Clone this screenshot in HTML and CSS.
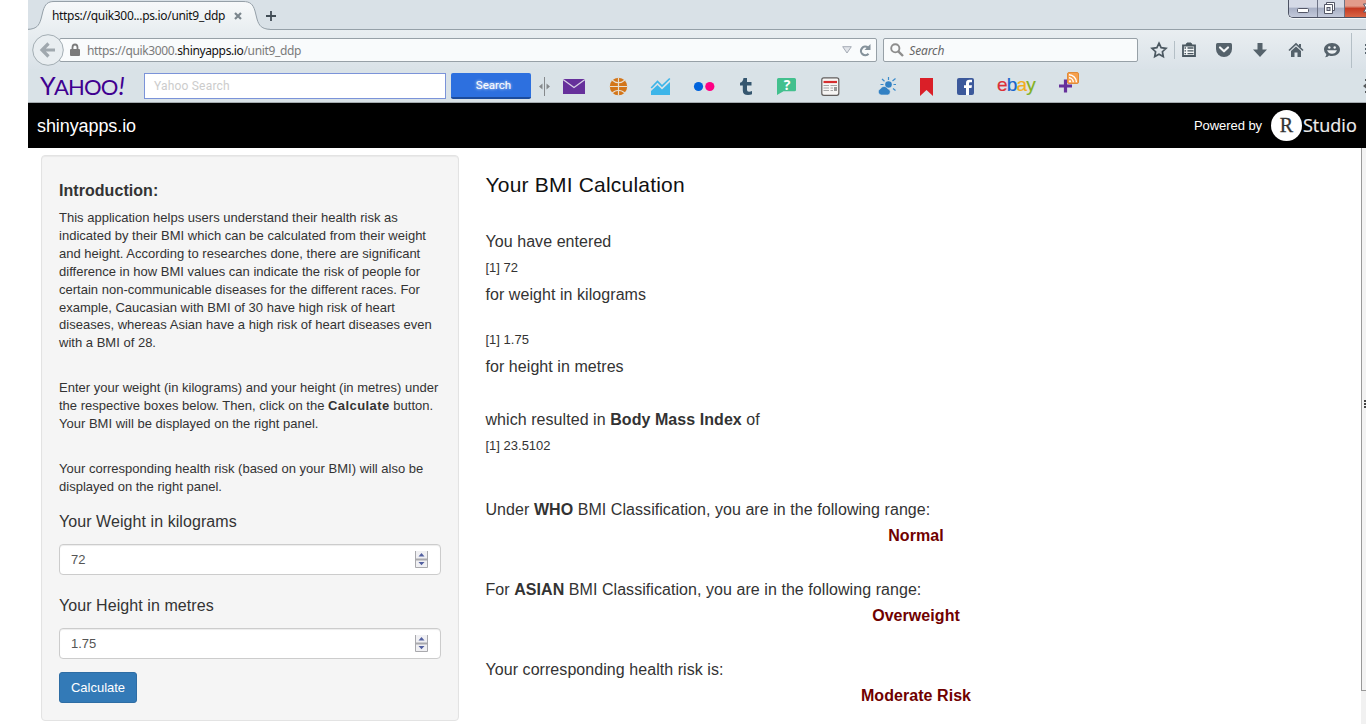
FILE: index.html
```
<!DOCTYPE html>
<html lang="en">
<head>
<meta charset="utf-8">
<title>Your BMI Calculation</title>
<link rel="stylesheet" href="styles.css">
</head>
<body>
<div class="window">
  <div class="tabstrip">
    <div class="tab">
      <svg class="tab-shape" width="242" height="30" viewBox="0 0 242 30"><defs><linearGradient id="tabfill" x1="0" y1="0" x2="0" y2="1"><stop offset="0" stop-color="#f7f9fa"/><stop offset="1" stop-color="#e9eef1"/></linearGradient></defs><path d="M0 29.5C8 29.5 11 26 13 19L15 11C17 4 20 1.5 26 1.5H215C222 1.5 225 4 227 11L229 19C231 26 234 29.5 242 29.5V30H0Z" fill="url(#tabfill)"/><path d="M0 29.3C8 29 11 26 13 19L15 11C17 4 20 1.5 26 1.5H215C222 1.5 225 4 227 11L229 19C231 26 234 29 242 29.3" fill="none" stroke="#95a0a8"/></svg>
      <span class="tab-title">https://quik300...ps.io/unit9_ddp</span>
      <svg class="tab-close" width="8" height="8" viewBox="0 0 8 8"><path d="M1 1L7 7M7 1L1 7" stroke="#7b868d" stroke-width="2.200"/></svg>
    </div>
    <svg class="tab-new" width="10" height="10" viewBox="0 0 10 10"><path d="M5 0V10M0 5H10" stroke="#414c55" stroke-width="1.8"/></svg>
    <div class="controls">
      <div class="control"><svg width="28" height="17" viewBox="0 0 28 17"><rect x="8.500" y="8.500" width="11" height="4" rx="1" fill="#fff" stroke="#535666"/></svg></div>
      <div class="control mid"><svg width="26" height="17" viewBox="0 0 26 17"><path d="M8.500 2.500H16.500V10.500H8.500Z" fill="#fff" stroke="#535666"/><path d="M6.500 4.500H14.500V13.500H6.500Z" fill="#fff" stroke="#535666"/><rect x="9" y="7.500" width="3" height="3" fill="#c6cad8" stroke="#535666"/></svg></div>
      <div class="control close"><svg width="21" height="17" viewBox="0 0 21 17"><path d="M18.500 4H23V12H18.500L21 8Z" fill="#fff" stroke="#535666"/></svg></div>
    </div>
  </div>
  <div class="navbar">
    <svg class="back" width="32" height="32" viewBox="0 0 32 32"><circle cx="16" cy="16" r="15.300" fill="#e9eef1" stroke="#a3adb3"/><path d="M23 16H12M16.500 9.500L10 16L16.500 22.500" fill="none" stroke="#a0a8ae" stroke-width="3.200"/></svg>
    <div class="url">
      <svg width="12" height="14" viewBox="0 0 12 14"><path d="M3.500 7V4.500A2.500 3 0 0 1 8.500 4.500V7" fill="none" stroke="#7b7b7b" stroke-width="1.800"/><rect x="1" y="6" width="10" height="7" rx="1" fill="#7b7b7b"/></svg>
      <span class="address">https://quik3000.<b>shinyapps.io</b>/unit9_ddp</span>
      <svg class="drop" width="10" height="8" viewBox="0 0 10 8"><path d="M.700 .700H9.300L5 7Z" fill="#e2e5ea" stroke="#a5abb5"/></svg>
      <svg class="reload" width="12" height="13" viewBox="0 0 12 13"><path d="M9.500 9.800A4.300 4.300 0 1 1 9 3.600" fill="none" stroke="#85929b" stroke-width="2.200"/><path d="M11.500 0V6H5.500Z" fill="#85929b"/></svg>
    </div>
    <div class="find">
      <svg width="14" height="14" viewBox="0 0 14 14"><circle cx="5.300" cy="5.300" r="4.100" fill="none" stroke="#8d8d8d" stroke-width="1.900"/><path d="M8.300 8.300L13 13" stroke="#8d8d8d" stroke-width="2.400"/></svg>
      <span>Search</span>
    </div>
    <svg class="nav-icon star" viewBox="0 0 24 24"><path d="M12 5.200L14.100 9.700L19 10.300L15.400 13.700L16.300 18.600L12 16.200L7.700 18.600L8.600 13.700L5 10.300L9.900 9.700Z" fill="none" stroke="#4b5861" stroke-width="1.700"/></svg>
    <i class="rule short"></i>
    <svg class="nav-icon clip" viewBox="0 0 24 24"><path d="M6 7.500H18V18H6Z" fill="#f3f6f7" stroke="#4b5861" stroke-width="1.800"/><path d="M9 7L10 5H14L15 7Z" fill="#4b5861" stroke="#4b5861"/><path d="M7.500 10H9M10.500 10H16.500M7.500 12.800H9M10.500 12.800H16.500M7.500 15.600H9M10.500 15.600H16.500" stroke="#4b5861" stroke-width="1.300"/></svg>
    <svg class="nav-icon pocket" viewBox="0 0 24 24"><path d="M4 6.500Q4 5 5.500 5H18.500Q20 5 20 6.500V11A8 8 0 0 1 4 11Z" fill="#55626b"/><path d="M8 9.500L12 13.300L16 9.500" fill="none" stroke="#f3f6f7" stroke-width="2.200" stroke-linecap="round" stroke-linejoin="round"/></svg>
    <svg class="nav-icon down" viewBox="0 0 24 24"><path d="M9.500 5H14.500V11.500H19L12 19L5 11.500H9.500Z" fill="#55626b"/></svg>
    <svg class="nav-icon home" viewBox="0 0 24 24"><path d="M5 12.500L12 6L19 12.500" fill="none" stroke="#55626b" stroke-width="1.700"/><path d="M7 13L12 8.500L17 13V19H13.500V14.500H10.500V19H7Z" fill="#55626b"/><path d="M16 6V9" stroke="#55626b" stroke-width="2"/></svg>
    <svg class="nav-icon chat" viewBox="0 0 24 24"><path d="M12 5C17 5 20 8 20 11.500S17 18 12 18Q10.500 18 9 17.500Q8 19 5 19.200Q6.500 18 6.300 16.300Q4 14.500 4 11.500C4 8 7 5 12 5Z" fill="#55626b"/><circle cx="9.300" cy="9.500" r="1.200" fill="#edf1f3"/><circle cx="14.700" cy="9.500" r="1.200" fill="#edf1f3"/><path d="M7 12.200H17Q15.500 15.800 12 15.800T7 12.200Z" fill="#edf1f3"/></svg>
    <i class="rule tall"></i>
    <svg class="burger" width="2" height="14" viewBox="0 0 2 14"><path d="M1 2H2M1 6H2M1 10H2" stroke="#55626b" stroke-width="2"/></svg>
  </div>
  <div class="toolbar">
    <span class="yahoo"><span class="big">Y</span>AHOO<em>!</em></span>
    <div class="ysearch">Yahoo Search</div>
    <div class="ybutton">Search</div>
    <svg class="tool grip" viewBox="0 0 12 34"><path d="M6.500 8V27" stroke="#85898c"/><path d="M4.500 14.500V20.500L1 17.500ZM8.500 14.500V20.500L12 17.500Z" fill="#85898c"/></svg>
    <svg class="tool g19" viewBox="0 0 24 34"><rect x="1" y="10" width="22" height="15" fill="#66309b"/><path d="M1 10.500L12 18.500L23 10.500" fill="none" stroke="#d9d0e6" stroke-width="1.300"/></svg>
    <svg class="tool g20" viewBox="0 0 24 34"><circle cx="12.500" cy="17.500" r="8.700" fill="#d37519"/><path d="M12.500 8.500V26.500M3.500 17.500H21.500M6 11Q12.500 16.500 19 11M6 24Q12.500 18.500 19 24" fill="none" stroke="#e7dfd3" stroke-width="1.200"/></svg>
    <svg class="tool g18" viewBox="0 0 24 34"><path d="M3 26V22L9.500 16L14 20.500L22 13V26Z" fill="#3db5e9"/><path d="M3.200 19L9.500 12.500L14 17L21.800 9.500" fill="none" stroke="#3db5e9" stroke-width="1.700"/></svg>
    <svg class="tool g20" viewBox="0 0 24 34"><circle cx="6.500" cy="17.500" r="4.600" fill="#0063dc"/><circle cx="17.800" cy="17.500" r="4.600" fill="#ff0084"/></svg>
    <svg class="tool g18" viewBox="0 0 24 34"><path d="M9.500 9H13V13H17.500V16.500H13V21Q13 22.700 15 22.700Q16.500 22.700 18 22V25.200Q16.500 26 14 26Q8.800 26 8.800 21.500V16.500H6V13.800Q9 13 9.500 9Z" fill="#35566f"/></svg>
    <svg class="tool g17" viewBox="0 0 24 34"><path d="M2 10.500Q2 9 3.500 9H19.500Q21 9 21 10.500V21Q21 22.300 19.500 22.300H8.500L2 26Z" fill="#43c08e"/><text x="12" y="20.500" class="question">?</text></svg>
    <svg class="tool g19" viewBox="0 0 24 34"><rect x="3.800" y="8.800" width="17" height="17.500" rx="2" fill="#f6f5f4" stroke="#615e5d" stroke-width="1.200"/><path d="M5.500 13H19" stroke="#d62d2e" stroke-width="2.200"/><path d="M5.500 16.500H11M12.500 16.500H19M5.500 19H11M12.500 19H15M5.500 21.500H11M12.500 21.500H15" stroke="#a5a5a5" stroke-width="1.100"/><rect x="16" y="18" width="3" height="4" fill="#989898"/></svg>
    <svg class="tool g33" viewBox="0 0 24 34"><circle cx="13.500" cy="15.500" r="3.300" fill="#3281c4"/><path d="M13.500 8V11M7 10L9.500 12.300M20.500 9.500L17.500 12M5.500 15.500H8.500M18.500 15.500H21M18 19.500L20.500 21.500" stroke="#3b8bcb" stroke-width="1.200"/><path d="M6 26A3.200 3.200 0 0 1 5.500 19.800A4 4 0 0 1 12.800 19.800A3.200 3.200 0 0 1 13 26Z" fill="#3281c4" stroke="#d9e2e8" stroke-width=".6"/></svg>
    <svg class="tool g15" viewBox="0 0 24 34"><path d="M6 9H19V27L12.500 21L6 27Z" fill="#da1f28"/></svg>
    <svg class="tool g15" viewBox="0 0 24 34"><rect x="4" y="9" width="17" height="17" rx="2" fill="#3c599b"/><path d="M13 26V19H11V16.300H13V14Q13 10.700 16.500 10.700H19V13.300H17Q16 13.300 16 14.500V16.300H19L18.500 19H16V26Z" fill="#fff"/></svg>
    <span class="ebay"><i class="r">e</i><i class="b">b</i><i class="y">a</i><i class="g">y</i></span>
    <svg class="tool g19" viewBox="0 0 24 34"><path d="M8.500 10.500V23.500M2 17H15" stroke="#66309b" stroke-width="3.200"/><rect x="10.500" y="3.500" width="11" height="11" rx="1.500" fill="#f6a04d" stroke="#e08b39"/><circle cx="13" cy="12.300" r="1.100" fill="#fff"/><path d="M12 8.800A4.500 4.500 0 0 1 16.300 13.200M12 5.700A7.500 7.500 0 0 1 19.400 13.200" fill="none" stroke="#fff" stroke-width="1.400"/></svg>
    <svg class="gear" width="3" height="18" viewBox="0 0 3 18"><path d="M0 9L3 6.500V11.500ZM2 2H3V4H2ZM2 14H3V16H2Z" fill="#55585a"/></svg>
  </div>
  <div class="brandbar">
    <span class="site">shinyapps.io</span>
    <span class="powered">Powered by</span>
    <span class="r-ball">R</span><span class="studio">Studio</span>
  </div>
  <div class="page">
    <div class="sidebar">
      <h4>Introduction:</h4>
      <p>This application helps users understand their health risk as<br>indicated by their BMI which can be calculated from their weight<br>and height. According to researches done, there are significant<br>difference in how BMI values can indicate the risk of people for<br>certain non-communicable diseases for the different races. For<br>example, Caucasian with BMI of 30 have high risk of heart<br>diseases, whereas Asian have a high risk of heart diseases even<br>with a BMI of 28.</p>
      <p>Enter your weight (in kilograms) and your height (in metres) under<br>the respective boxes below. Then, click on the <b>Calculate</b> button.<br>Your BMI will be displayed on the right panel.</p>
      <p class="last">Your corresponding health risk (based on your BMI) will also be<br>displayed on the right panel.</p>
      <div class="label">Your Weight in kilograms</div>
      <div class="field"><span>72</span><svg width="13" height="17" viewBox="0 0 13 17"><use href="#spin"/></svg></div>
      <div class="label second">Your Height in metres</div>
      <div class="field"><span>1.75</span><svg width="13" height="17" viewBox="0 0 13 17"><g id="spin"><path d="M.500 0V16.500H12.500V0M0 8.500H13" fill="#f0f0f3" stroke="#a9a9ad"/><path d="M0 8.500H13" stroke="#a9a9ad" stroke-width="2"/><path d="M3.500 5.500L6.500 2L9.500 5.500ZM3.500 11L6.500 14.300L9.500 11Z" fill="#5360a0"/></g></svg></div>
      <button class="calculate">Calculate</button>
    </div>
    <div class="main">
      <h2>Your BMI Calculation</h2>
      <div class="line">You have entered</div>
      <div class="value">[1] 72</div>
      <div class="line end">for weight in kilograms</div>
      <div class="value">[1] 1.75</div>
      <div class="line end2">for height in metres</div>
      <div class="line">which resulted in <b>Body Mass Index</b> of</div>
      <div class="value end3">[1] 23.5102</div>
      <div class="line">Under <b>WHO</b> BMI Classification, you are in the following range:</div>
      <div class="result">Normal</div>
      <div class="line">For <b>ASIAN</b> BMI Classification, you are in the following range:</div>
      <div class="result">Overweight</div>
      <div class="line">Your corresponding health risk is:</div>
      <div class="result">Moderate Risk</div>
    </div>
    <div class="edge">
      <div class="edge-panel"><svg width="2" height="9" viewBox="0 0 2 9"><path d="M0 1H2M0 4H2M0 7H2" stroke="#444" stroke-width="1.800"/></svg></div>
    </div>
  </div>
</div>
</body>
</html>
```
FILE: styles.css
```
* { box-sizing: border-box; }
body {
  margin: 0;
  background: #fff;
  color: #333;
  font-family: "Liberation Sans", Arial, sans-serif;
  overflow: hidden;
}
svg { display: block; flex: none; }
.window { margin-left: 28px; width: 1338px; height: 728px; overflow: hidden; white-space: nowrap; }

.tabstrip {
  display: flex;
  align-items: flex-start;
  height: 30px;
  background: #d9e1e7;
  box-shadow: inset 0 -1px #95a0a8;
}
.tab { position: relative; display: flex; width: 232px; height: 30px; padding-left: 24px; }
.tab-shape { position: absolute; left: 0; top: 0; }
.tab-title {
  position: relative;
  width: 174px;
  font: 12px/31px "Noto Sans", sans-serif;
  letter-spacing: -.32px;
  color: #111;
}
.tab-close { position: relative; margin: 12px 0 0 8px; }
.tab-new { margin: 11px 0 0 6px; }
.controls { display: flex; margin-left: auto; border: 1px solid #4c5263; border-width: 0 0 1px 1px; border-radius: 0 0 0 5px; overflow: hidden; box-shadow: 0 1px #f3f6f8; }
.control { height: 17px; background: linear-gradient(#d5dae6 40%, #a9b1c6 50%, #c3c9da); }
.control.mid { border: 1px solid #6d7385; border-width: 0 1px; width: 28px; }
.control.close { width: 21px; background: linear-gradient(#e29b8b 35%, #c53b24 50%, #d96545); }

.navbar {
  display: flex;
  align-items: center;
  height: 39px;
  padding: 1px 0 0 4px;
  background: linear-gradient(#e9eef1, #dae2e8);
}
.back { position: relative; z-index: 1; }
.url, .find {
  display: flex;
  align-items: center;
  height: 24px;
  border: 1px solid #97a0a7;
  border-radius: 2px;
  background: #f9fbfc;
}
.url { width: 819px; margin-left: -5px; padding: 0 5px 0 9px; }
.address { margin: 2px 0 0 6px; font: 12px/22px "Noto Sans", sans-serif; letter-spacing: -.36px; color: #7a7a7a; }
.address b { font-weight: 400; color: #111; }
.drop { margin-left: auto; }
.reload { margin-left: 7px; }
.find { width: 255px; margin-left: 6px; padding-left: 6px; font: italic 12px/22px "Noto Sans", sans-serif; letter-spacing: -.13px; color: #666; }
.find span { margin: 2px 0 0 5px; }
.nav-icon { width: 24px; height: 24px; }
.star { margin-left: 9px; }
.rule { width: 1px; background: #b4bfc6; }
.rule.short { height: 18px; margin: 0 2px 0 3px; }
.pocket { margin-left: 11px; }
.down, .home, .chat { margin-left: 12px; }
.rule.tall { height: 35px; margin-left: 7px; }
.burger { margin-left: 12px; }

.toolbar {
  display: flex;
  align-items: center;
  height: 34px;
  background: #d9e2e7;
  box-shadow: inset 0 -1px #a4abaf;
}
.yahoo { width: 104px; padding-left: 12px; color: #400090; font: 22px/34px Lato, sans-serif; letter-spacing: -.900px; }
.yahoo .big { font-size: 25px; letter-spacing: -1.500px; }
.yahoo em { margin-left: 1px; font-size: 25px; font-weight: 400; }
.ysearch { width: 302px; height: 26px; margin-left: 12px; border: 1px solid #7b93d9; background: #fff; padding-left: 9px; font: 12px/24px Roboto, sans-serif; letter-spacing: .2px; color: #ccc; }
.ybutton { width: 80px; height: 26px; margin-left: 5px; padding-left: 5px; border-radius: 2px; border-bottom: 2px solid #1b4b9c; background: #2d70df; color: #fff; text-align: center; font: 11.500px/25px Roboto, sans-serif; text-shadow: 0 0 3px #fff; }
.tool { width: 24px; height: 34px; }
.tool.grip { width: 12px; margin-left: 7px; }
.g15 { margin-left: 15px; }
.g17 { margin-left: 17px; }
.g18 { margin-left: 18px; }
.g19 { margin-left: 19px; }
.grip + .g19 { margin-left: 12px; }
.g20 { margin-left: 20px; }
.g33 { margin-left: 33px; }
.question { fill: #fff; font: bold 14px "Open Sans", sans-serif; text-anchor: middle; }
.ebay { width: 40px; margin-left: 20px; margin-right: 1px; font: 19px/30px "Liberation Sans", sans-serif; letter-spacing: -.8px; padding-bottom: 2px; }
.ebay i { font-style: normal; -webkit-text-stroke: .2px; }
.ebay .r { color: #dd3038; }
.ebay .b { color: #1665cc; }
.ebay .y { color: #f2ae1c; }
.ebay .g { color: #82b121; }
.gear { margin-left: auto; }

.brandbar { display: flex; align-items: center; height: 45px; padding: 0 8px 0 9px; background: #000; color: #fff; }
.site { padding-top: 1px; font-size: 18px; letter-spacing: -.09px; }
.powered { margin-left: auto; font-size: 13px; letter-spacing: -.06px; }
.r-ball { width: 31px; height: 31px; margin-left: 9px; border-radius: 50%; background: #fff; color: #333; text-align: center; font: 20px/31px "Liberation Serif", serif; -webkit-text-stroke: .3px #333; }
.studio { width: 55px; margin-left: 1px; color: #eee; font: 18px/42px "Open Sans", sans-serif; padding-bottom: 2px; -webkit-text-stroke: .2px #eee; }

.page { display: flex; height: 580px; padding-left: 13px; }
.sidebar { width: 418px; height: 566px; margin-top: 7px; padding: 26px 17px 0; border: 1px solid #e3e3e3; border-radius: 4px; background: #f5f5f5; box-shadow: inset 0 1px 1px rgba(0,0,0,.05); }
h4 { margin: 0 0 9px; font-size: 16px; line-height: 18px; letter-spacing: .05px; }
.sidebar p { margin: 0 0 27px; font-size: 13px; line-height: 17.900px; letter-spacing: .01px; }
.sidebar p b { letter-spacing: .42px; }
.sidebar p.last { margin-bottom: 16px; }
.label { font-size: 16px; line-height: 20px; letter-spacing: .07px; }
.label.second { margin-top: 21px; }
.field { display: flex; align-items: center; justify-content: space-between; height: 31px; margin-top: 12px; padding: 0 12px 0 11px; border: 1px solid #ccc; border-radius: 4px; background: #fff; box-shadow: inset 0 1px 1px rgba(0,0,0,.075); color: #555; font-size: 13px; }
.calculate { display: block; width: 78px; height: 31px; margin-top: 13px; padding: 0; border: 1px solid #2e6da4; border-radius: 3px; background: #337ab7; color: #fff; font: 13px "Liberation Sans", sans-serif; }

.main { width: 861px; margin-left: 26.500px; padding-top: 25px; }
h2 { margin: 0 0 32px; font-size: 21px; font-weight: 400; line-height: 24px; letter-spacing: .2px; color: #111; }
.line, .result { font-size: 16px; line-height: 26px; letter-spacing: .06px; }
.value { padding-bottom: 2px; font-size: 13px; line-height: 25px; }
.end { margin-bottom: 18.500px; }
.end2 { margin-bottom: 27.500px; }
.end3 { margin-bottom: 36.700px; }
.result { text-align: center; color: #700000; font-weight: 700; margin-bottom: 28.100px; }

.edge { width: 5px; margin-left: auto; height: 576px; background: #f1f1f1; }
.edge-panel { display: flex; align-items: center; justify-content: flex-end; height: 543px; padding-bottom: 30px; border: 1px solid #999; border-width: 0 0 1px 1px; background: #f3f3f3; }
```
